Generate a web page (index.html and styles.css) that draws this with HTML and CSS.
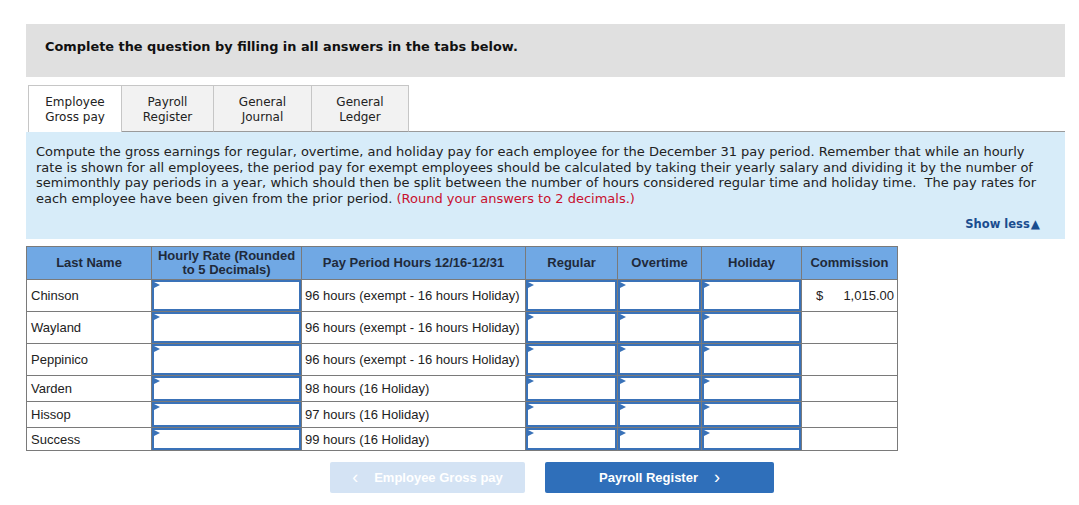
FILE: index.html
```html
<!DOCTYPE html>
<html>
<head>
<meta charset="utf-8">
<link rel="stylesheet" href="styles.css">
</head>
<body>
<div class="wrap">
  <div class="banner">Complete the question by filling in all answers in the tabs below.</div>
  <div class="tabs">
    <div class="tab active t1">Employee<br>Gross pay</div>
    <div class="tab t2">Payroll<br>Register</div>
    <div class="tab t3">General<br>Journal</div>
    <div class="tab t4">General<br>Ledger</div>
    <div class="tabfill"></div>
  </div>
  <div class="panel">
    <p class="instr">Compute the gross earnings for regular, overtime, and holiday pay for each employee for the December 31 pay period. Remember that while an hourly rate is shown for all employees, the period pay for exempt employees should be calculated by taking their yearly salary and dividing it by the number of semimonthly pay periods in a year, which should then be split between the number of hours considered regular time and holiday time.&nbsp; The pay rates for each employee have been given from the prior period. <span class="red">(Round your answers to 2 decimals.)</span></p>
    <div class="showless">Show less<span class="tri">&#9650;</span></div>
  </div>
  <table class="grid">
    <colgroup>
      <col class="c1"><col class="c2"><col class="c3"><col class="c4"><col class="c5"><col class="c6"><col class="c7">
    </colgroup>
    <thead>
      <tr>
        <th>Last Name</th>
        <th>Hourly Rate (Rounded<br>to 5 Decimals)</th>
        <th>Pay Period Hours 12/16-12/31</th>
        <th>Regular</th>
        <th>Overtime</th>
        <th>Holiday</th>
        <th>Commission</th>
      </tr>
    </thead>
    <tbody>
      <tr class="tall">
        <td class="name">Chinson</td>
        <td class="inp"><div class="box"></div></td>
        <td class="hrs">96 hours (exempt - 16 hours Holiday)</td>
        <td class="inp"><div class="box"></div></td>
        <td class="inp"><div class="box"></div></td>
        <td class="inp"><div class="box"></div></td>
        <td class="comm"><span>$</span><span>1,015.00</span></td>
      </tr>
      <tr class="tall">
        <td class="name">Wayland</td>
        <td class="inp"><div class="box"></div></td>
        <td class="hrs">96 hours (exempt - 16 hours Holiday)</td>
        <td class="inp"><div class="box"></div></td>
        <td class="inp"><div class="box"></div></td>
        <td class="inp"><div class="box"></div></td>
        <td></td>
      </tr>
      <tr class="tall">
        <td class="name">Peppinico</td>
        <td class="inp"><div class="box"></div></td>
        <td class="hrs">96 hours (exempt - 16 hours Holiday)</td>
        <td class="inp"><div class="box"></div></td>
        <td class="inp"><div class="box"></div></td>
        <td class="inp"><div class="box"></div></td>
        <td></td>
      </tr>
      <tr class="mid">
        <td class="name">Varden</td>
        <td class="inp"><div class="box"></div></td>
        <td class="hrs">98 hours (16 Holiday)</td>
        <td class="inp"><div class="box"></div></td>
        <td class="inp"><div class="box"></div></td>
        <td class="inp"><div class="box"></div></td>
        <td></td>
      </tr>
      <tr class="mid">
        <td class="name">Hissop</td>
        <td class="inp"><div class="box"></div></td>
        <td class="hrs">97 hours (16 Holiday)</td>
        <td class="inp"><div class="box"></div></td>
        <td class="inp"><div class="box"></div></td>
        <td class="inp"><div class="box"></div></td>
        <td></td>
      </tr>
      <tr class="short">
        <td class="name">Success</td>
        <td class="inp"><div class="box"></div></td>
        <td class="hrs">99 hours (16 Holiday)</td>
        <td class="inp"><div class="box"></div></td>
        <td class="inp"><div class="box"></div></td>
        <td class="inp"><div class="box"></div></td>
        <td></td>
      </tr>
    </tbody>
  </table>
  <div class="nav">
    <div class="btn prev"><span class="chev">&lsaquo;</span>Employee Gross pay</div>
    <div class="btn next">Payroll Register<span class="chev">&rsaquo;</span></div>
  </div>
</div>
</body>
</html>
```
FILE: styles.css
```css
html, body {
  margin: 0;
  padding: 0;
  background: #ffffff;
}
.wrap {
  padding: 24px 14px 0 26px;
  font-family: "DejaVu Sans", Verdana, sans-serif;
  color: #222;
}
.banner {
  background: #e0e0e0;
  height: 53px;
  box-sizing: border-box;
  padding: 15px 0 0 19px;
  font-weight: bold;
  font-size: 12.9px;
  color: #111;
}
.tabs {
  display: flex;
  margin-top: 8px;
  height: 47px;
}
.tab {
  box-sizing: border-box;
  height: 47px;
  border: 1px solid #c6c6c6;
  border-bottom: 1px solid #9a9a9a;
  background: #f2f2f2;
  font-size: 12px;
  line-height: 15px;
  text-align: center;
  padding-top: 9px;
  color: #222;
}
.tab + .tab { border-left: none; }
.tab.active {
  background: #fff;
  border-bottom: none;
  border-left-color: #c6c6c6;
}
.t1 { width: 94px; margin-left: 2px; }
.t2 { width: 92px; }
.t3 { width: 98px; }
.t4 { width: 97px; }
.tabfill {
  flex: 1;
  border-bottom: 1px solid #9a9a9a;
}
.panel {
  background: #d7ecf9;
  padding: 12px 20px 8px 10px;
  height: 107px;
  box-sizing: border-box;
}
.instr {
  margin: 0;
  font-size: 13px;
  line-height: 15.7px;
  color: #222;
}
.red { color: #c8102e; }
.showless {
  text-align: right;
  font-size: 11.5px;
  font-weight: bold;
  color: #1a4d8f;
  margin: 10px 5px 0 0;
}
.tri { font-size: 12px; margin-left: 1px; }
.grid {
  margin-top: 7px;
  border-collapse: collapse;
  table-layout: fixed;
  width: 871px;
  font-family: "Liberation Sans", Arial, sans-serif;
  font-size: 13px;
  color: #222;
}
.c1 { width: 125px; }
.c2 { width: 150px; }
.c3 { width: 224px; }
.c4 { width: 92px; }
.c5 { width: 84px; }
.c6 { width: 100px; }
.c7 { width: 96px; }
.grid th {
  background: #70a8e4;
  border: 1px solid #7a7a7a;
  height: 32px;
  font-weight: bold;
  font-size: 13px;
  line-height: 14px;
  color: #1f2a3a;
  padding: 0 2px;
}
.grid td {
  border: 1px solid #7a7a7a;
  padding: 0;
  vertical-align: middle;
}
.grid tr.tall td { height: 31px; }
.grid tr.mid td { height: 25px; }
.grid tr.short td { height: 22px; }
.grid td.name { padding-left: 4px; }
.grid td.hrs { padding-left: 3px; white-space: nowrap; }
.grid td.inp { position: relative; }
.box {
  position: absolute;
  left: 0; top: 0; right: 0; bottom: 0;
  border: 2px solid #3a72b8;
  background: #fff;
}
.box::before {
  content: "";
  position: absolute;
  left: 0;
  top: 0;
  border-left: 6px solid #3a72b8;
  border-top: 3px solid transparent;
  border-bottom: 3px solid transparent;
}
.grid td.comm {
  padding: 0 3px 0 14px;
}
.comm { white-space: nowrap; }
.grid td.comm span:first-child { float: left; }
.grid td.comm span:last-child { float: right; }
.nav {
  display: flex;
  gap: 20px;
  margin: 11px 0 0 304px;
}
.btn {
  height: 31px;
  box-sizing: border-box;
  border-radius: 2px;
  display: flex;
  align-items: center;
  justify-content: center;
  font-family: "Liberation Sans", Arial, sans-serif;
  font-weight: bold;
  font-size: 13px;
  color: #fff;
}
.prev {
  width: 195px;
  background: #d4e3f4;
}
.prev .chev { margin-right: 16px; font-size: 18px; font-weight: normal; }
.next {
  width: 229px;
  background: #2f6fba;
}
.next .chev { margin-left: 16px; font-size: 18px; font-weight: normal; }
```
